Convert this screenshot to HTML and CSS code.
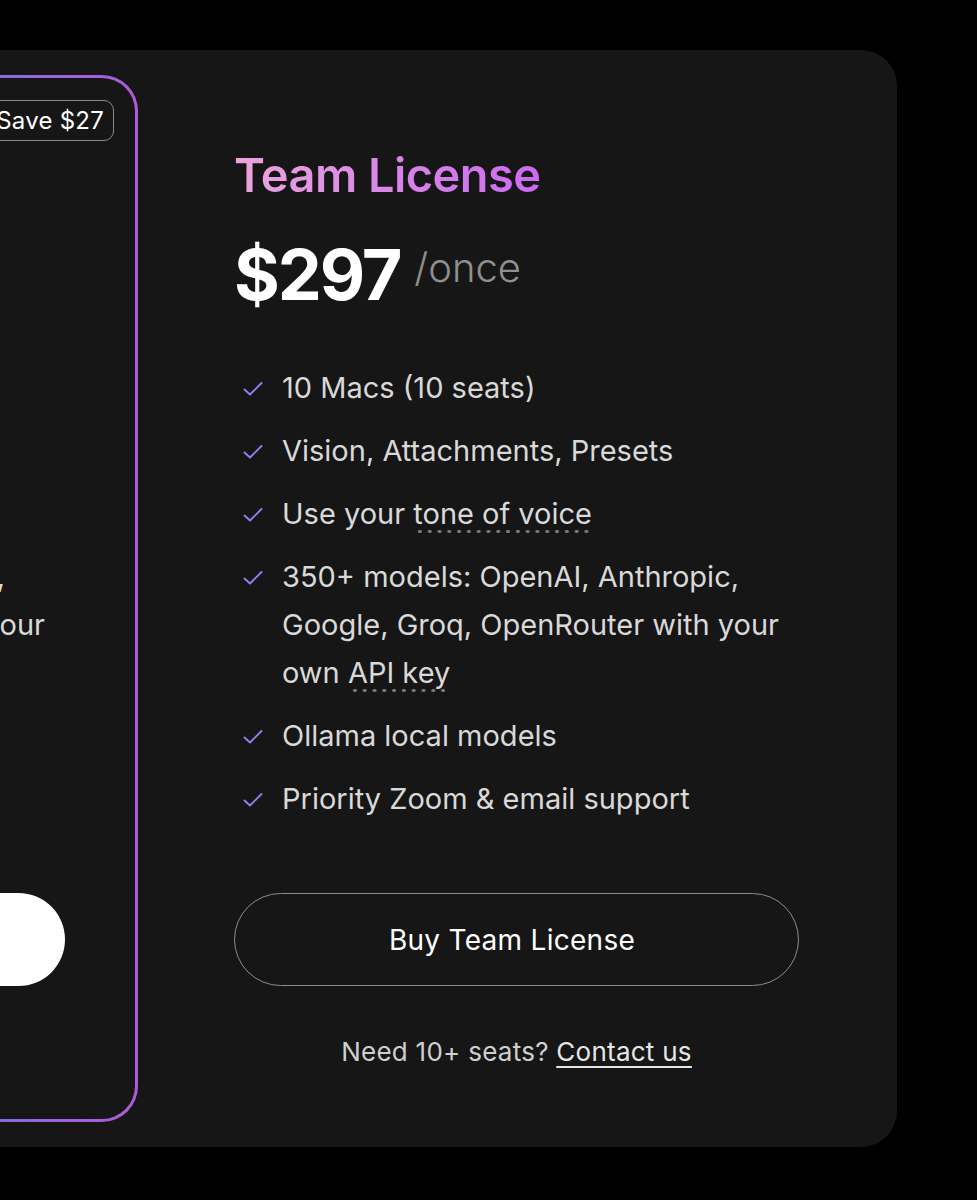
FILE: index.html
```html
<!DOCTYPE html>
<html lang="en">
<head>
<meta charset="utf-8">
<title>Pricing</title>
<link rel="stylesheet" href="styles.css">
</head>
<body>
<div class="stage">
  <section class="pricing">
    <article class="plan plan-featured">
      <span class="badge">Save $27</span>
      <h2 class="plan-title">Personal License</h2>
      <div class="price-row">
        <span class="price">$69</span>
        <span class="period">/once</span>
      </div>
      <ul class="features">
        <li><svg class="check" viewBox="0 0 20 16"><path d="M1.5 8.5 L7 13.5 L18.5 2"/></svg><span>1 Mac (1 seat)</span></li>
        <li><svg class="check" viewBox="0 0 20 16"><path d="M1.5 8.5 L7 13.5 L18.5 2"/></svg><span>Vision, Attachments, Presets</span></li>
        <li><svg class="check" viewBox="0 0 20 16"><path d="M1.5 8.5 L7 13.5 L18.5 2"/></svg><span>Use your <span class="hint">tone of voice</span></span></li>
        <li><svg class="check" viewBox="0 0 20 16"><path d="M1.5 8.5 L7 13.5 L18.5 2"/></svg><span>350+ models: OpenAI, Anthropic, Google, Groq, OpenRouter with your own <span class="hint">API key</span></span></li>
        <li><svg class="check" viewBox="0 0 20 16"><path d="M1.5 8.5 L7 13.5 L18.5 2"/></svg><span>Ollama local models</span></li>
        <li><svg class="check" viewBox="0 0 20 16"><path d="M1.5 8.5 L7 13.5 L18.5 2"/></svg><span>Email support</span></li>
      </ul>
      <a class="buy buy-solid" href="#">Buy License</a>
    </article>

    <article class="plan plan-team">
      <h2 class="plan-title">Team License</h2>
      <div class="price-row">
        <span class="price">$297</span>
        <span class="period">/once</span>
      </div>
      <ul class="features">
        <li><svg class="check" viewBox="0 0 20 16"><path d="M1.5 8.5 L7 13.5 L18.5 2"/></svg><span>10 Macs (10 seats)</span></li>
        <li><svg class="check" viewBox="0 0 20 16"><path d="M1.5 8.5 L7 13.5 L18.5 2"/></svg><span>Vision, Attachments, Presets</span></li>
        <li><svg class="check" viewBox="0 0 20 16"><path d="M1.5 8.5 L7 13.5 L18.5 2"/></svg><span>Use your <span class="hint">tone of voice</span></span></li>
        <li><svg class="check" viewBox="0 0 20 16"><path d="M1.5 8.5 L7 13.5 L18.5 2"/></svg><span>350+ models: OpenAI, Anthropic, Google, Groq, OpenRouter with your own <span class="hint">API key</span></span></li>
        <li><svg class="check" viewBox="0 0 20 16"><path d="M1.5 8.5 L7 13.5 L18.5 2"/></svg><span>Ollama local models</span></li>
        <li><svg class="check" viewBox="0 0 20 16"><path d="M1.5 8.5 L7 13.5 L18.5 2"/></svg><span>Priority Zoom &amp; email support</span></li>
      </ul>
      <a class="buy buy-outline" href="#">Buy Team License</a>
      <p class="note">Need 10+ seats? <a href="#">Contact us</a></p>
    </article>
  </section>
</div>
</body>
</html>
```

FILE: styles.css
```css
* { box-sizing: border-box; }

html, body {
  margin: 0;
  background: #000;
}

body {
  font-family: Inter, "Noto Sans", "Liberation Sans", sans-serif;
  color: #d9d9d9;
  overflow: hidden;
}

.stage {
  padding-top: 50px;
  width: 977px;
  height: 1200px;
}

.pricing {
  display: flex;
  align-items: flex-start;
  gap: 96px;
  margin-left: -597px;
  width: 1494px;
  height: 1097px;
  padding: 25px 99px 26px 25px;
  background: #161616;
  border-radius: 36px;
}

.plan {
  display: flex;
  flex-direction: column;
  flex: none;
}

.plan-featured {
  position: relative;
  width: 710px;
  height: 1047px;
  padding: 69px 70px 0 69px;
  border: 3px solid transparent;
  border-radius: 36px;
  background:
    linear-gradient(#161616, #161616) padding-box,
    linear-gradient(90deg, #4f6df2 0%, #7d66e6 70%, #8d68e2 81%, #ae5bd8 100%) border-box;
}

.plan-team {
  width: 565px;
  padding-top: 72px;
}

.badge {
  position: absolute;
  top: 22px;
  right: 21px;
  height: 41px;
  padding: 0 9px;
  display: flex;
  align-items: center;
  border: 1.5px solid #8a8a8a;
  border-radius: 10px;
  font-size: 24px;
  letter-spacing: 0.01em;
  color: #fff;
  white-space: nowrap;
}

.plan-title {
  margin: 0;
  font-size: 47px;
  line-height: 56px;
  font-weight: 600;
  letter-spacing: -0.012em;
  background: linear-gradient(90deg, #eca6dc 0%, #d98ae6 45%, #cc6af2 100%);
  -webkit-background-clip: text;
  background-clip: text;
  color: transparent;
  align-self: flex-start;
}

.price-row {
  display: flex;
  align-items: flex-start;
  gap: 14px;
  margin-top: 37px;
}

.price {
  font-size: 70px;
  line-height: 70px;
  font-weight: 700;
  letter-spacing: -0.03em;
  color: #fff;
}

.period {
  font-size: 40px;
  line-height: 40px;
  font-weight: 300;
  color: #8f8f8f;
  margin-top: 8px;
}

.features {
  list-style: none;
  margin: 54px 0 0;
  padding: 0;
  display: flex;
  flex-direction: column;
  gap: 15px;
}

.features li {
  display: flex;
  align-items: flex-start;
  font-size: 29px;
  line-height: 48px;
  color: #d9d9d9;
}

.check {
  flex: none;
  width: 20px;
  height: 16px;
  margin: 17px 19px 0 9px;
  fill: none;
  stroke: #9a7cf2;
  stroke-width: 1.9;
  stroke-linecap: round;
  stroke-linejoin: round;
}

.hint {
  padding-bottom: 3px;
  background-image: radial-gradient(circle, #7a7a7a 1.6px, transparent 2px);
  background-size: 9.8px 5px;
  background-repeat: repeat-x;
  background-position: 2px 100%;
}

.buy {
  display: flex;
  align-items: center;
  justify-content: center;
  height: 93px;
  margin-top: 70px;
  padding-right: 9px;
  border-radius: 999px;
  font-size: 28px;
  font-weight: 400;
  letter-spacing: 0.01em;
  text-decoration: none;
}

.buy-outline {
  border: 1.5px solid #8c8c8c;
  color: #fff;
}

.buy-solid {
  background: #fff;
  color: #111;
}

.note {
  margin: 48px 0 0;
  text-align: center;
  font-size: 26px;
  line-height: 36px;
  letter-spacing: 0.01em;
  font-weight: 400;
  color: #cfcfcf;
}

.note a {
  color: #e6e6e6;
  text-decoration: underline;
  text-underline-offset: 5px;
  text-decoration-thickness: 1.5px;
}
```
